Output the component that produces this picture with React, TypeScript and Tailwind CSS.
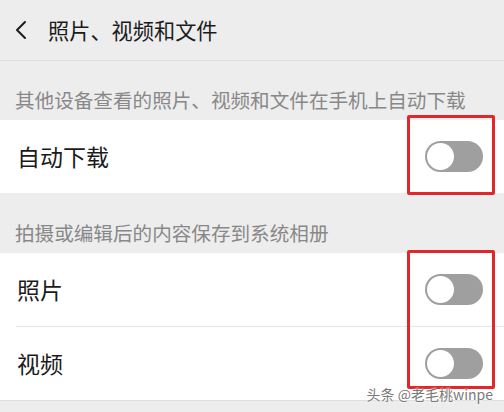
import React from 'react';

const Toggle: React.FC = () => (
  <div className="w-[58px] h-[31px] rounded-full bg-[#9f9f9f] p-[2px] flex items-center">
    <div className="w-[27px] h-[27px] rounded-full bg-white" />
  </div>
);

const Row: React.FC<{ label: string }> = ({ label }) => (
  <div className="bg-white flex items-center justify-between pl-[17px] pr-[21px] h-[73px]">
    <span className="text-[23px] text-[#1b1b1b] leading-none">{label}</span>
    <Toggle />
  </div>
);

const Caption: React.FC<{ text: string; h: string }> = ({ text, h }) => (
  <div className={`flex items-end pb-[10px] pl-[15px] text-[19.6px] text-[#888888] leading-none ${h}`}>
    {text}
  </div>
);

export default function App() {
  return (
    <div
      className="w-[504px] h-[412px] bg-[#ededed] relative overflow-hidden"
      style={{ fontFamily: '"Noto Sans CJK SC", "Noto Sans", sans-serif' }}
    >
      <div className="h-[61px] flex items-center border-b border-[#e0e0e0]">
        <svg width="14" height="20" viewBox="0 0 14 20" className="ml-[14px]">
          <path d="M11 2 L3 10 L11 18" fill="none" stroke="#1b1b1b" strokeWidth="2" strokeLinecap="round" strokeLinejoin="round" />
        </svg>
        <span className="ml-[20px] text-[21.2px] text-[#1b1b1b] leading-none">照片、视频和文件</span>
      </div>

      <Caption text="其他设备查看的照片、视频和文件在手机上自动下载" h="h-[59px]" />

      <Row label="自动下载" />

      <Caption text="拍摄或编辑后的内容保存到系统相册" h="h-[60px]" />

      <div className="flex flex-col bg-white border-b border-[#dedede]">
        <Row label="照片" />
        <div className="ml-[16px] h-px bg-[#e6e6e6]" />
        <Row label="视频" />
      </div>

      <div className="absolute left-[407px] top-[115px] w-[88px] h-[80px] border-[3px] border-[#e3262a] rounded-[2px]" />
      <div className="absolute left-[407px] top-[250px] w-[88px] h-[139px] border-[3px] border-[#e3262a] rounded-[2px]" />

      <div
        className="absolute right-[11px] top-[387px] whitespace-nowrap text-[14px] leading-none text-[#7a7a7a]"
        style={{ textShadow: '0 0 2px #fff, 0 0 2px #fff' }}
      >
        头条 @老毛桃winpe
      </div>
    </div>
  );
}
